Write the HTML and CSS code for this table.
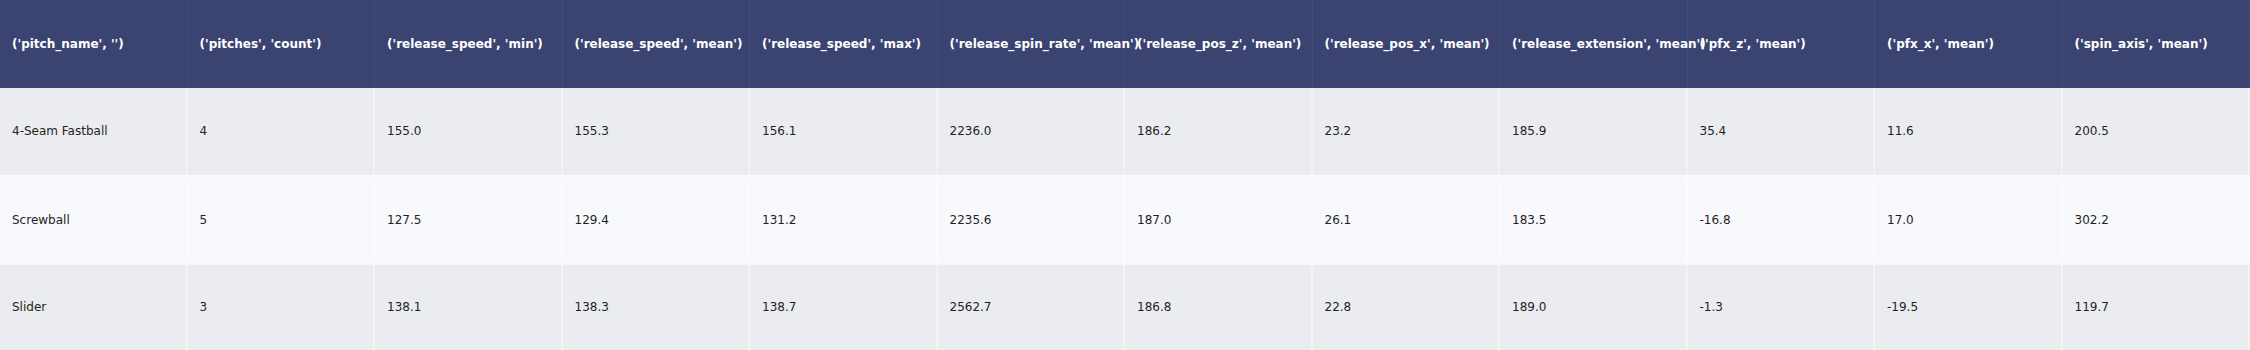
FILE: index.html
```html
<!DOCTYPE html>
<html lang="en">
<head>
  <meta charset="UTF-8" />
  <title>Pitch Summary</title>
  <link rel="stylesheet" href="styles.css">
</head>
<body>

  <table class="stats">
    <thead>
      <tr>
        <th>('pitch_name', '')</th>
        <th>('pitches', 'count')</th>
        <th>('release_speed', 'min')</th>
        <th>('release_speed', 'mean')</th>
        <th>('release_speed', 'max')</th>
        <th>('release_spin_rate', 'mean')</th>
        <th>('release_pos_z', 'mean')</th>
        <th>('release_pos_x', 'mean')</th>
        <th>('release_extension', 'mean')</th>
        <th>('pfx_z', 'mean')</th>
        <th>('pfx_x', 'mean')</th>
        <th>('spin_axis', 'mean')</th>
      </tr>
    </thead>
    <tbody>
      <tr>
        <td>4-Seam Fastball</td>
        <td>4</td>
        <td>155.0</td>
        <td>155.3</td>
        <td>156.1</td>
        <td>2236.0</td>
        <td>186.2</td>
        <td>23.2</td>
        <td>185.9</td>
        <td>35.4</td>
        <td>11.6</td>
        <td>200.5</td>
      </tr>
      <tr>
        <td>Screwball</td>
        <td>5</td>
        <td>127.5</td>
        <td>129.4</td>
        <td>131.2</td>
        <td>2235.6</td>
        <td>187.0</td>
        <td>26.1</td>
        <td>183.5</td>
        <td>-16.8</td>
        <td>17.0</td>
        <td>302.2</td>
      </tr>
      <tr>
        <td>Slider</td>
        <td>3</td>
        <td>138.1</td>
        <td>138.3</td>
        <td>138.7</td>
        <td>2562.7</td>
        <td>186.8</td>
        <td>22.8</td>
        <td>189.0</td>
        <td>-1.3</td>
        <td>-19.5</td>
        <td>119.7</td>
      </tr>
    </tbody>
  </table>

</body>
</html>
```

FILE: styles.css
```css
body {
  margin: 0;
  font-family: 'DejaVu Sans', Verdana, sans-serif;
  font-size: 12px;
  background: #ebecf0;
}

.stats {
  width: 2250px;
  table-layout: fixed;
  border-collapse: separate;
  border-spacing: 0;
}

.stats th,
.stats td {
  box-sizing: border-box;
  height: 87.5px;
  padding: 0 12px;
  text-align: left;
  white-space: nowrap;
  vertical-align: middle;
}

.stats th {
  background: #3b4470;
  color: #fff;
  font-weight: bold;
  border-right: 1px solid rgba(255,255,255,0.05);
}

.stats td {
  color: #1f1f24;
  border-right: 2px solid rgba(255,255,255,0.4);
  border-top: 2px solid rgba(255,255,255,0.6);
}

.stats tbody tr:first-child td {
  border-top: none;
}

.stats tbody tr:nth-child(odd) td {
  background: #ebecf0;
}

.stats tbody tr:nth-child(even) td {
  background: #f8f9fd;
}
```
